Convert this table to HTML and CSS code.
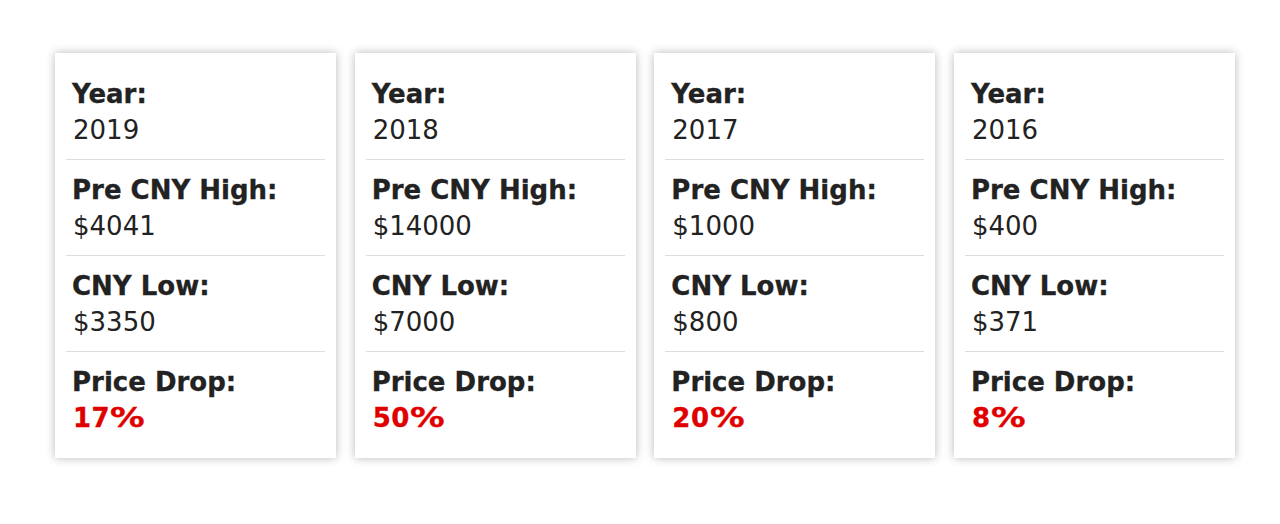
FILE: index.html
```html
<!DOCTYPE html>
<html lang="en">
<head>
<meta charset="utf-8">
<title>CNY Price Drops</title>
<link rel="stylesheet" href="styles.css">
</head>
<body>
<div class="cards">
  <div class="card">
    <div class="row"><div class="label">Year:</div><div class="value">2019</div></div>
    <div class="row"><div class="label">Pre CNY High:</div><div class="value">$4041</div></div>
    <div class="row"><div class="label">CNY Low:</div><div class="value">$3350</div></div>
    <div class="row"><div class="label">Price Drop:</div><div class="value drop">17<span class="pct">%</span></div></div>
  </div>
  <div class="card">
    <div class="row"><div class="label">Year:</div><div class="value">2018</div></div>
    <div class="row"><div class="label">Pre CNY High:</div><div class="value">$14000</div></div>
    <div class="row"><div class="label">CNY Low:</div><div class="value">$7000</div></div>
    <div class="row"><div class="label">Price Drop:</div><div class="value drop">50<span class="pct">%</span></div></div>
  </div>
  <div class="card">
    <div class="row"><div class="label">Year:</div><div class="value">2017</div></div>
    <div class="row"><div class="label">Pre CNY High:</div><div class="value">$1000</div></div>
    <div class="row"><div class="label">CNY Low:</div><div class="value">$800</div></div>
    <div class="row"><div class="label">Price Drop:</div><div class="value drop">20<span class="pct">%</span></div></div>
  </div>
  <div class="card">
    <div class="row"><div class="label">Year:</div><div class="value">2016</div></div>
    <div class="row"><div class="label">Pre CNY High:</div><div class="value">$400</div></div>
    <div class="row"><div class="label">CNY Low:</div><div class="value">$371</div></div>
    <div class="row"><div class="label">Price Drop:</div><div class="value drop">8<span class="pct">%</span></div></div>
  </div>
</div>
</body>
</html>
```
FILE: styles.css
```css
html, body {
  margin: 0;
  padding: 0;
  background: #fff;
}
body {
  font-family: "DejaVu Sans", Verdana, sans-serif;
  color: #222;
  min-height: 524px;
  box-sizing: border-box;
  padding: 53px 0 66px 55px;
}
.cards {
  display: grid;
  grid-template-columns: repeat(4, 1fr);
  column-gap: 18.67px;
  width: 1180px;
}
.card {
  background: #fff;
  box-shadow: 0 0 9px rgba(0, 0, 0, 0.28);
  padding: 11px 11px;
}
.row {
  padding: 12px 6px 11px;
  border-bottom: 1px solid #ddd;
  font-size: 26px;
  line-height: 36px;
}
.row:last-child {
  border-bottom: none;
}
.label {
  font-weight: bold;
  -webkit-text-stroke: 0.3px #222;
}
.value {
  font-weight: normal;
  padding-left: 1px;
}
.value.drop {
  color: #e00000;
  font-weight: bold;
  letter-spacing: 0.5px;
  -webkit-text-stroke: 0.3px #e00000;
}
.pct {
  display: inline-block;
  transform: scaleX(1.33);
  transform-origin: left center;
}
```
